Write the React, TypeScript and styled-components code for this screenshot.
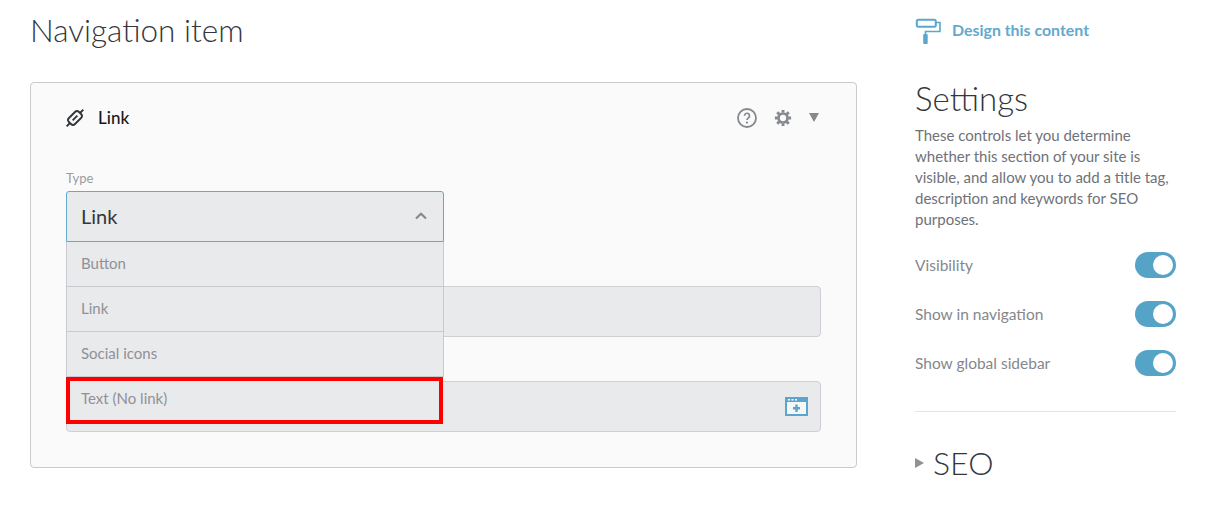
import styled, { createGlobalStyle } from 'styled-components';

const GlobalStyle = createGlobalStyle`
  html, body {
    margin: 0;
    padding: 0;
    background: #fff;
    font-family: Lato, "Noto Sans", sans-serif;
    color: #3c3f47;
  }
`;

const Page = styled.div`
  display: flex;
  width: 1230px;
  height: 522px;
  overflow: hidden;
  padding-left: 30px;
  box-sizing: border-box;
`;

const Main = styled.main`
  width: 827px;
  margin-right: 58px;
`;

const Title = styled.h1`
  margin: 10px 0 0;
  height: 72px;
  font-size: 31.5px;
  line-height: 40px;
  font-weight: 300;
  color: #33363d;
`;

const Card = styled.section`
  height: 386px;
  box-sizing: border-box;
  padding: 0 35px;
  background: #fafafa;
  border: 1px solid #c9cacc;
  border-radius: 4px;
`;

const CardHeader = styled.header`
  display: flex;
  align-items: center;
  height: 70px;
  margin-bottom: 16px;
`;

const CardTitle = styled.span`
  margin: 0 0 2px 14px;
  font-size: 17px;
  font-weight: 500;
  color: #17181c;
`;

const HeaderActions = styled.div`
  display: flex;
  align-items: center;
  margin-left: auto;
  margin-right: 2px;
  gap: 17px;
`;

const FieldLabel = styled.label`
  display: block;
  height: 22px;
  font-size: 13px;
  line-height: 19px;
  color: #9a9ca1;
`;

const SelectWrap = styled.div`
  position: relative;
  width: 378px;
`;

const SelectBox = styled.div`
  display: flex;
  align-items: center;
  justify-content: space-between;
  height: 51px;
  box-sizing: border-box;
  padding: 0 16px 2px 14px;
  background: #e9eaec;
  border: 1px solid #63a9c9;
  border-radius: 3px 3px 0 0;
  font-size: 20px;
  color: #33363d;
`;

const Menu = styled.ul`
  position: absolute;
  top: 100%;
  left: 0;
  right: 0;
  z-index: 2;
  margin: 0;
  padding: 0;
  list-style: none;
`;

const MenuItem = styled.li<{ $highlighted?: boolean }>`
  display: flex;
  align-items: center;
  height: 45px;
  box-sizing: border-box;
  padding: 0 0 2px 14px;
  background: #e9eaec;
  border: ${(p) => (p.$highlighted ? '4px solid #fe0000' : '1px solid #c9cacf')};
  border-top-width: ${(p) => (p.$highlighted ? '4px' : '0')};
  ${(p) => (p.$highlighted ? 'padding-left: 11px; height: 47px; margin-right: 1px; padding-bottom: 5px;' : '')}
  font-size: 15px;
  color: #8f9197;
`;

const InputField = styled.div`
  display: flex;
  align-items: center;
  justify-content: flex-end;
  height: 51px;
  box-sizing: border-box;
  margin-top: 44px;
  padding-right: 12px;
  background: #e9eaec;
  border: 1px solid #cfd0d3;
  border-radius: 4px;
`;

const Sidebar = styled.aside`
  width: 261px;
`;

const DesignLink = styled.a`
  display: flex;
  align-items: center;
  gap: 11px;
  height: 26px;
  margin-top: 18px;
  font-size: 15.9px;
  font-weight: 700;
  color: #63a9cf;
`;

const DesignLabel = styled.span`
  margin-bottom: 4px;
`;

const SideHeading = styled.h2`
  margin: 0;
  font-size: 32px;
  line-height: 40px;
  font-weight: 300;
  color: #33363d;
`;

const SettingsHeading = styled(SideHeading)`
  margin-top: 34px;
  font-size: 33px;
`;

const Description = styled.p`
  margin: 7px 0 22px;
  font-size: 15px;
  line-height: 21px;
  color: #6f7278;
`;

const ToggleRow = styled.div`
  display: flex;
  align-items: center;
  justify-content: space-between;
  height: 26px;
  margin-bottom: 23px;
  font-size: 15.5px;
  color: #85878d;
`;

const Toggle = styled.span`
  display: flex;
  justify-content: flex-end;
  width: 41px;
  height: 26px;
  box-sizing: border-box;
  padding: 3px;
  background: #56a3c8;
  border-radius: 13px;

  &::after {
    content: '';
    width: 20px;
    height: 20px;
    background: #fff;
    border-radius: 50%;
  }
`;

const Divider = styled.hr`
  height: 1px;
  margin: 35px 0 31px;
  background: #e3e4e6;
  border: 0;
`;

const SeoRow = styled.div`
  display: flex;
  align-items: center;
  gap: 9px;
`;

const Triangle = styled.span`
  width: 0;
  height: 0;
  border-style: solid;
  border-width: 5px 0 5px 9px;
  border-color: transparent transparent transparent #8f9197;
`;

const CaretDown = styled.span`
  width: 0;
  height: 0;
  margin-bottom: 2px;
  border-style: solid;
  border-width: 9px 5.5px 0 5.5px;
  border-color: #85888d transparent transparent transparent;
`;

const LinkIcon = () => (
  <svg width="18" height="18" viewBox="-.5 -.5 19 19" fill="none" stroke="#33363d" strokeWidth="2">
    <g transform="rotate(-45 9 9)">
      <rect x="1.500" y="4.500" width="15" height="9" rx="3" />
      <path d="M-3.500 9h5M16.500 9h5M5.500 9h7" />
    </g>
  </svg>
);

const HelpIcon = () => (
  <svg width="20" height="20" viewBox="0 0 20 20" fill="none">
    <circle cx="10" cy="10" r="9" stroke="#85888d" strokeWidth="1.8" />
    <path d="M7.500 7.800a2.500 2.500 0 1 1 3.800 2.100c-.9.500-1.300 1-1.300 2" stroke="#85888d" strokeWidth="1.7" />
    <circle cx="10" cy="14.600" r="1.100" fill="#85888d" />
  </svg>
);

const GearIcon = () => (
  <svg width="18" height="18" viewBox="0 0 20 20" fill="none">
    <circle cx="10" cy="10" r="5" stroke="#85888d" strokeWidth="3" />
    <path
      d="M10 1v3M10 16v3M1 10h3M16 10h3M3.600 3.600l2.200 2.200M14.200 14.200l2.200 2.200M3.600 16.400l2.200-2.200M14.200 5.800l2.200-2.200"
      stroke="#85888d"
      strokeWidth="3.200"
    />
  </svg>
);

const ChevronUp = () => (
  <svg width="12" height="8" viewBox="0 0 12 8" fill="none">
    <path d="M1 6.500 6 1.800l5 4.700" stroke="#85888d" strokeWidth="2.200" />
  </svg>
);

const BrowserAddIcon = () => (
  <svg width="23" height="19" viewBox="0 0 23 19">
    <rect x="1" y="1" width="21" height="17" fill="#f4f6f7" stroke="#5aa6cc" strokeWidth="2" />
    <rect x="1" y="1" width="21" height="4" fill="#5aa6cc" />
    <path d="M3 2h2v1.500H3zM6.500 2h2v1.500h-2zM10 2h2v1.500h-2z" fill="#fff" />
    <path d="M11.500 7.500v7.500M8 11.200h7" stroke="#5aa6cc" strokeWidth="2.400" />
  </svg>
);

const RollerIcon = () => (
  <svg width="26" height="26" viewBox="0 0 26 26" fill="none">
    <rect x="1.800" y="1.800" width="19" height="7" rx="1.500" stroke="#5aa6cc" strokeWidth="2" />
    <path d="M21 4.500h4v9H10.500V17" stroke="#5aa6cc" strokeWidth="1.600" />
    <rect x="8.200" y="16" width="4.500" height="10" rx="1" fill="#5aa6cc" />
  </svg>
);

const menuOptions = ['Button', 'Link', 'Social icons'];
const toggles = ['Visibility', 'Show in navigation', 'Show global sidebar'];

const App = () => (
  <Page>
    <GlobalStyle />
    <Main>
      <Title>Navigation item</Title>
      <Card>
        <CardHeader>
          <LinkIcon />
          <CardTitle>Link</CardTitle>
          <HeaderActions>
            <HelpIcon />
            <GearIcon />
            <CaretDown />
          </HeaderActions>
        </CardHeader>
        <FieldLabel>Type</FieldLabel>
        <SelectWrap>
          <SelectBox>
            Link
            <ChevronUp />
          </SelectBox>
          <Menu>
            {menuOptions.map((option) => (
              <MenuItem key={option}>{option}</MenuItem>
            ))}
            <MenuItem $highlighted>Text (No link)</MenuItem>
          </Menu>
        </SelectWrap>
        <InputField />
        <InputField>
          <BrowserAddIcon />
        </InputField>
      </Card>
    </Main>
    <Sidebar>
      <DesignLink>
        <RollerIcon />
        <DesignLabel>Design this content</DesignLabel>
      </DesignLink>
      <SettingsHeading>Settings</SettingsHeading>
      <Description>
        These controls let you determine whether this section of your site is visible, and allow you to add a title
        tag, description and keywords for SEO purposes.
      </Description>
      {toggles.map((label) => (
        <ToggleRow key={label}>
          {label}
          <Toggle />
        </ToggleRow>
      ))}
      <Divider />
      <SeoRow>
        <Triangle />
        <SideHeading>SEO</SideHeading>
      </SeoRow>
    </Sidebar>
  </Page>
);

export default App;
